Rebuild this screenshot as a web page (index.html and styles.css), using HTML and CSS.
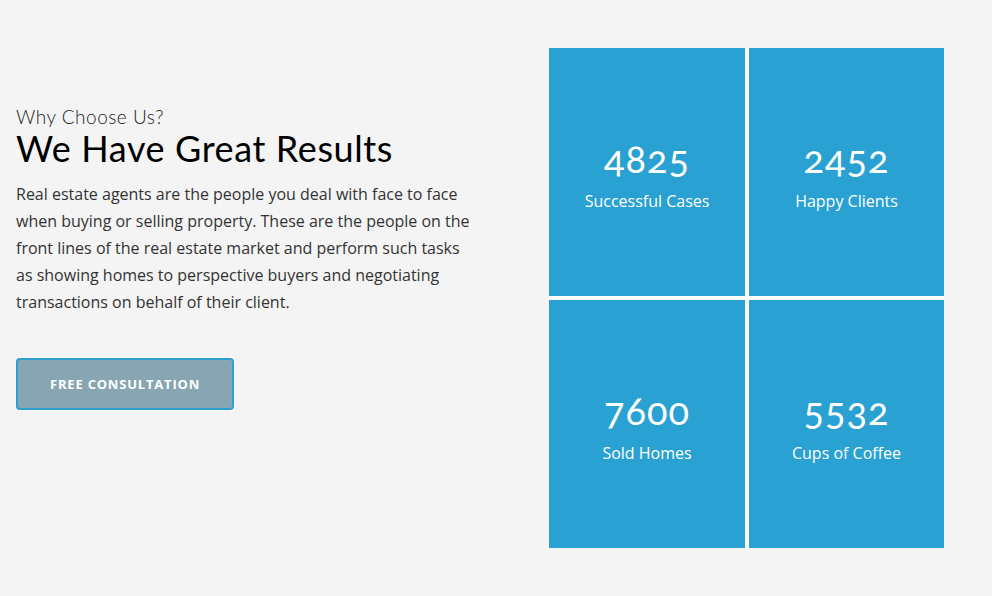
FILE: index.html
```html
<!DOCTYPE html>
<html lang="en">
<head>
    <meta charset="UTF-8">
    <meta name="viewport" content="width=device-width, initial-scale=1.0">
    <title>Why Choose Us</title>
    <link rel="stylesheet" href="styles.css">
</head>
<body>
    <section class="results">
        <div class="intro">
            <h3 class="intro-sub">Why Choose Us?</h3>
            <h2 class="intro-title">We Have Great Results</h2>
            <p class="intro-text">Real estate agents are the people you deal with face to face when buying or selling property. These are the people on the front lines of the real estate market and perform such tasks as showing homes to perspective buyers and negotiating transactions on behalf of their client.</p>
            <button class="consult-btn">FREE CONSULTATION</button>
        </div>
        <div class="stats">
            <div class="stat-box">
                <span class="stat-num">4825</span>
                <span class="stat-label">Successful Cases</span>
            </div>
            <div class="stat-box">
                <span class="stat-num">2452</span>
                <span class="stat-label">Happy Clients</span>
            </div>
            <div class="stat-box">
                <span class="stat-num">7600</span>
                <span class="stat-label">Sold Homes</span>
            </div>
            <div class="stat-box">
                <span class="stat-num">5532</span>
                <span class="stat-label">Cups of Coffee</span>
            </div>
        </div>
    </section>
</body>
</html>
```

FILE: styles.css
```css
body {
    font-family: "Open Sans", Arial, sans-serif;
    background-color: #f4f4f4;
    margin: 0;
    color: #333;
}
.results {
    display: flex;
    justify-content: space-between;
    padding: 48px 48px 48px 16px;
}
.intro {
    width: 462px;
    padding-top: 58px;
}
.intro-sub {
    font-family: Lato, sans-serif;
    font-weight: 300;
    font-size: 19px;
    letter-spacing: 0.5px;
    line-height: 22px;
    margin: 0;
    color: #222;
}
.intro-title {
    font-family: Lato, sans-serif;
    font-weight: 400;
    font-size: 36px;
    letter-spacing: 0.6px;
    line-height: 40px;
    margin: 0 0 13px;
    color: #000;
}
.intro-text {
    font-size: 16px;
    line-height: 27px;
    margin: 0 0 42px;
}
.consult-btn {
    width: 218px;
    height: 52px;
    background-color: #87a6b2;
    border: 2px solid #2e9fcf;
    border-radius: 4px;
    color: #fff;
    font-family: "Open Sans", Arial, sans-serif;
    font-weight: 700;
    font-size: 13px;
    letter-spacing: 0.8px;
    cursor: pointer;
}
.stats {
    display: grid;
    grid-template-columns: 196px 195px;
    grid-template-rows: 248px 248px;
    gap: 4px;
    background-color: #fcfcfc;
}
.stat-box {
    background-color: #2aa1d3;
    color: #fff;
    display: flex;
    flex-direction: column;
    align-items: center;
    justify-content: center;
    padding-top: 6px;
}
.stat-num {
    font-family: Lato, sans-serif;
    font-size: 38px;
    letter-spacing: 1px;
    line-height: 40px;
    font-variant-numeric: oldstyle-nums;
}
.stat-label {
    font-size: 16px;
    line-height: 22px;
    margin-top: 12px;
}
```
